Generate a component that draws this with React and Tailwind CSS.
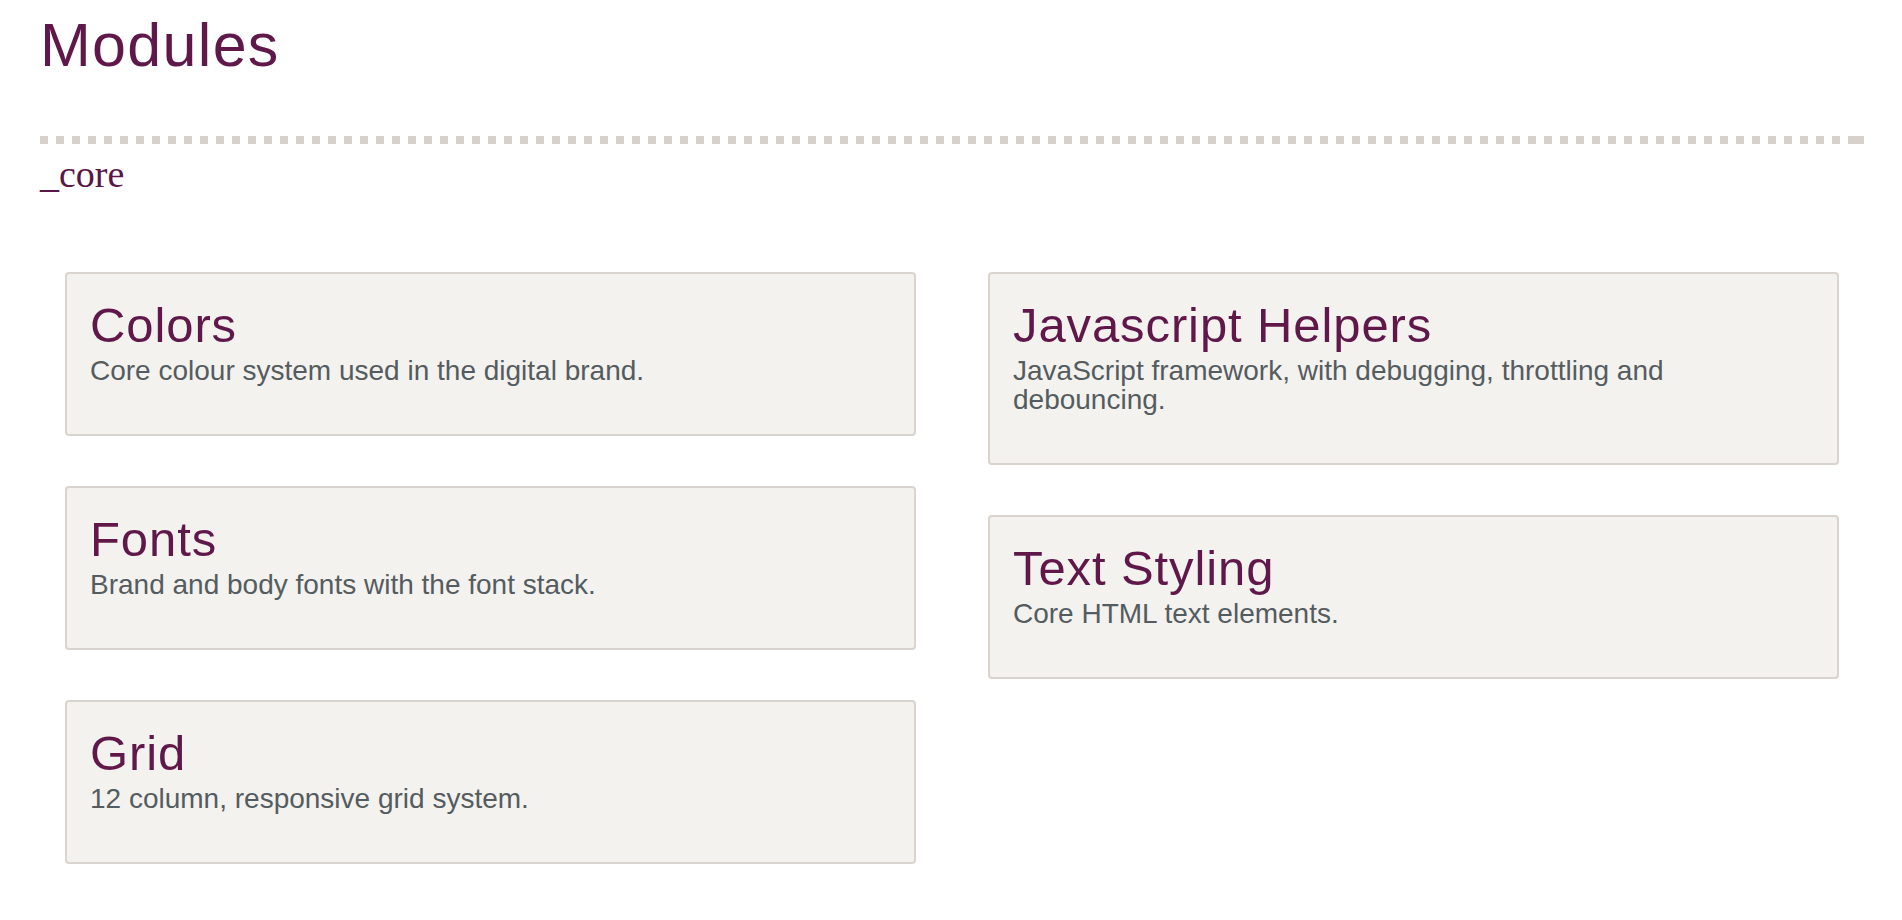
import React from "react";

const left = [
  { title: "Colors", desc: "Core colour system used in the digital brand." },
  { title: "Fonts", desc: "Brand and body fonts with the font stack." },
  { title: "Grid", desc: "12 column, responsive grid system." },
];

const right = [
  {
    title: "Javascript Helpers",
    desc: "JavaScript framework, with debugging, throttling and debouncing.",
  },
  { title: "Text Styling", desc: "Core HTML text elements." },
];

function Card({ title, desc }) {
  return (
    <div className="rounded-[4px] border-2 border-[#d9d4ce] bg-[#f3f2ef] pt-[21px] pb-[49px] px-[23px]">
      <h2 className="text-[49px] leading-[60px] tracking-[0.9px] text-[#60184a] font-normal">{title}</h2>
      <p className="mt-[1px] text-[28px] leading-[29px] text-[#555c60]">{desc}</p>
    </div>
  );
}

export default function App() {
  return (
    <div
      className="min-h-screen bg-white pt-[12px] pl-[40px] pr-[38px] pb-[40px]"
      style={{ fontFamily: '"Liberation Sans", Arial, Helvetica, sans-serif' }}
    >
      <h1 className="text-[61px] leading-[66px] tracking-[1.3px] text-[#60184a] font-normal">Modules</h1>
      <div className="mt-[58px] flex h-[8px]">
        <div className="flex-1 bg-[repeating-linear-gradient(90deg,#d6d1cb_0px,#d6d1cb_8px,transparent_8px,transparent_16px)]" />
        <div className="w-[12px] bg-[#d6d1cb]" />
      </div>
      <div
        className="mt-[9px] text-[38px] leading-[42px] text-[#5a1646]"
        style={{ fontFamily: '"Liberation Serif", "Times New Roman", serif' }}
      >
        _core
      </div>
      <div className="mt-[77px] px-[25px] grid grid-cols-2 gap-x-[72px] items-start">
        <div className="flex flex-col gap-[50px]">
          {left.map((c) => (
            <Card key={c.title} {...c} />
          ))}
        </div>
        <div className="flex flex-col gap-[50px]">
          {right.map((c) => (
            <Card key={c.title} {...c} />
          ))}
        </div>
      </div>
    </div>
  );
}
